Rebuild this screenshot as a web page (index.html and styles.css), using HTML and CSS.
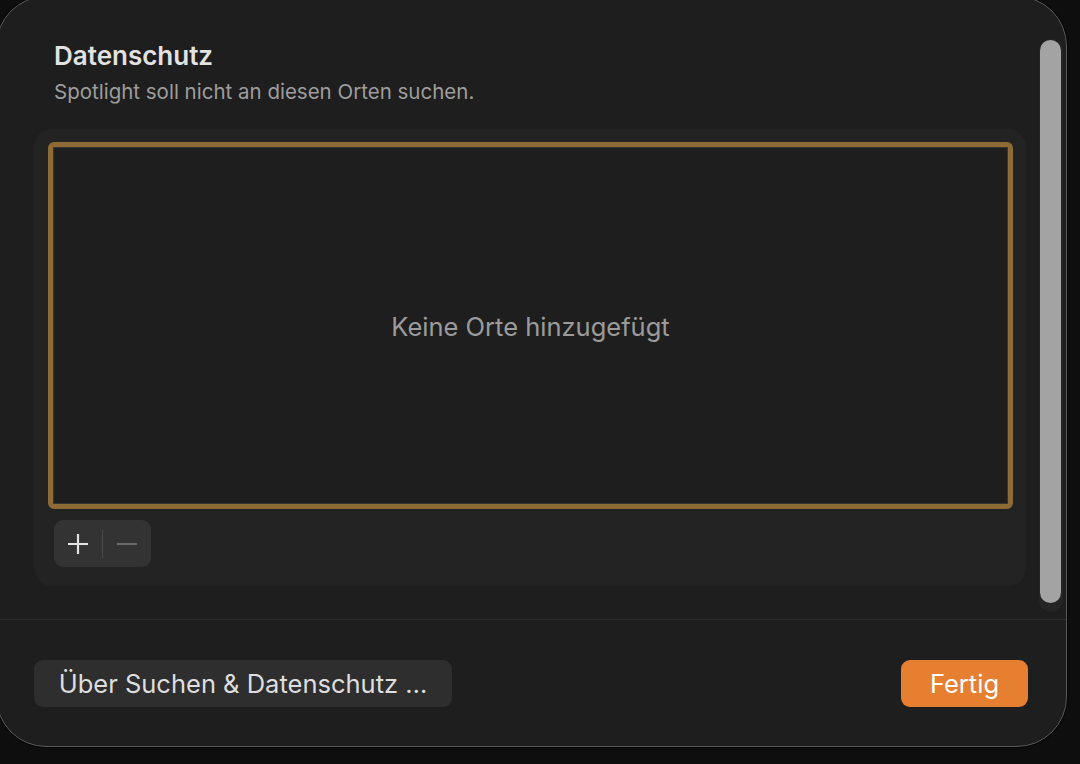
FILE: index.html
```html
<!DOCTYPE html>
<html lang="de">
<head>
<meta charset="utf-8">
<title>Datenschutz</title>
<link rel="stylesheet" href="styles.css">
</head>
<body>
<div class="backdrop">
  <div class="window">
    <div class="top">
      <div class="main">
        <h1 class="title">Datenschutz</h1>
        <p class="subtitle">Spotlight soll nicht an diesen Orten suchen.</p>
        <div class="group">
          <div class="list">
            <span class="empty">Keine Orte hinzugefügt</span>
          </div>
          <div class="pm">
            <span class="pm-btn plus">
              <svg width="22" height="22" viewBox="0 0 22 22"><path d="M11 1v20M1 11h20" stroke="#e2e2e2" stroke-width="2.2" fill="none"/></svg>
            </span>
            <span class="pm-sep"></span>
            <span class="pm-btn minus">
              <svg width="22" height="22" viewBox="0 0 22 22"><path d="M1 11h20" stroke="#6a6a6a" stroke-width="2" fill="none"/></svg>
            </span>
          </div>
        </div>
      </div>
      <div class="scroll">
        <div class="track"><div class="thumb"></div></div>
      </div>
    </div>
    <div class="bottom">
      <button class="btn">Über Suchen &amp; Datenschutz …</button>
      <button class="btn primary">Fertig</button>
    </div>
  </div>
</div>
</body>
</html>
```

FILE: styles.css
```css
* { box-sizing: border-box; }
html, body { margin: 0; padding: 0; }
body {
  background: #0e0e0e;
  width: 1080px;
  height: 764px;
  overflow: hidden;
  font-family: Inter, "Helvetica Neue", "Liberation Sans", sans-serif;
}
.backdrop {
  width: 1080px;
  height: 764px;
  overflow: hidden;
}
.window {
  margin: -4px 0 0 -4px;
  width: 1071px;
  height: 751px;
  background: #1e1e1e;
  border: 1px solid #5a5a5a;
  border-radius: 50px;
  box-shadow: 0 0 0 1px #050505;
  display: flex;
  flex-direction: column;
  overflow: hidden;
}
.top {
  display: flex;
  height: 623px;
  border-bottom: 1px solid #2c2c2c;
}
.main {
  flex: 1;
  padding: 43px 13px 0 37px;
  display: flex;
  flex-direction: column;
}
.title {
  margin: 0 0 0 20px;
  font-size: 26px;
  line-height: 32px;
  font-weight: 600;
  color: #e2e2e2;
}
.subtitle {
  margin: 8px 0 0 20px;
  font-size: 20.5px;
  line-height: 24px;
  color: #9d9d9d;
}
.group {
  margin-top: 25px;
  height: 457px;
  background: #232323;
  border-radius: 18px;
  padding: 13px 13px 0 14px;
  display: flex;
  flex-direction: column;
}
.list {
  height: 367px;
  border: 5px solid #8e6a35;
  border-radius: 6px;
  background: #1e1e1e;
  box-shadow: inset 0 0 0 1px #353535;
  display: flex;
  align-items: center;
  justify-content: center;
}
.empty {
  font-size: 25.5px;
  color: #9b9b9b;
  margin-top: 1px;
}
.pm {
  margin: 11px 0 0 6px;
  width: 97px;
  height: 47px;
  background: #333333;
  border-radius: 9px;
  display: flex;
  align-items: center;
}
.pm-btn {
  width: 48px;
  display: flex;
  justify-content: center;
  align-items: center;
}
.pm-btn svg { display: block; }
.pm-sep {
  width: 1px;
  height: 28px;
  background: #4a4a4a;
}
.scroll {
  width: 26px;
  padding-top: 42px;
  margin-right: 1px;
}
.track {
  width: 24px;
  height: 573px;
  background: #252525;
  border-radius: 12px;
  padding: 1px 2px 0 1px;
}
.thumb {
  width: 21px;
  height: 563px;
  background: #a3a3a3;
  border-radius: 11px;
}
.bottom {
  flex: 1;
  display: flex;
  justify-content: space-between;
  align-items: flex-start;
  padding: 40px 38px 0 37px;
}
.btn {
  height: 47px;
  border: none;
  border-radius: 9px;
  background: #2e2e2e;
  color: #dedede;
  font-family: Inter, "Helvetica Neue", "Liberation Sans", sans-serif;
  font-size: 25.5px;
  padding: 0;
  width: 418px;
  cursor: default;
}
.btn.primary {
  width: 127px;
  background: #e77f30;
  color: #ffffff;
}
```
